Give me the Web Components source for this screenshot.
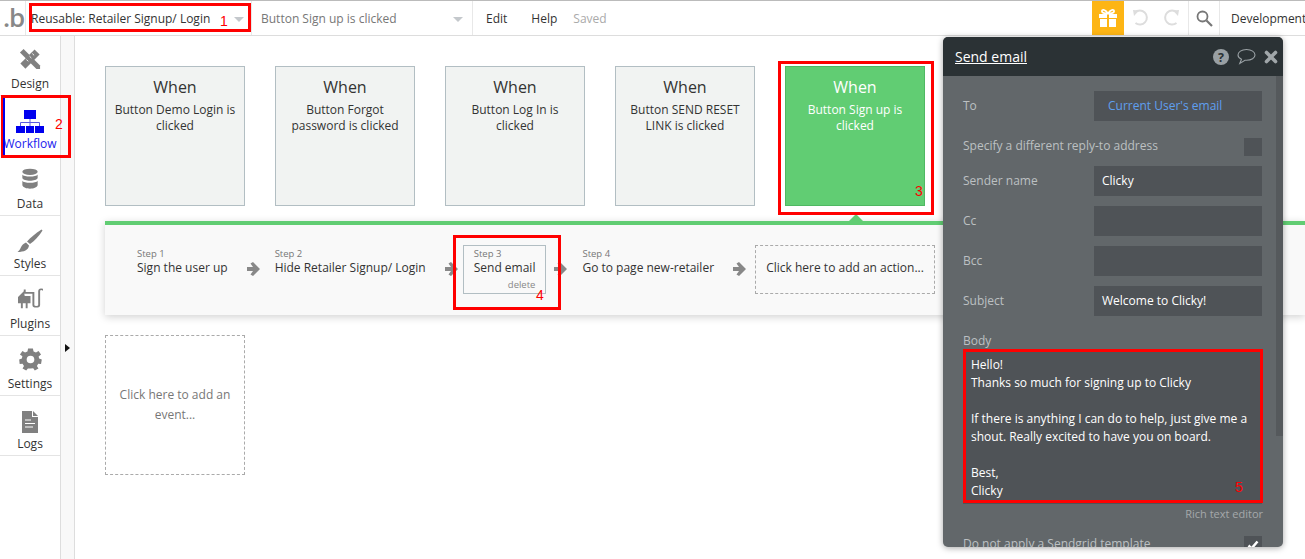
<!DOCTYPE html>
<html lang="en">
<head>
<meta charset="UTF-8">
<title>Workflow editor</title>
<style>
  html, body { margin: 0; height: 100%; overflow: hidden; background: #fff; }
  body { font-family: "Open Sans", "Liberation Sans", sans-serif; color: #222; }
</style>
</head>
<body>
<bubble-editor>
  <top-bar slot="top"></top-bar>
  <side-bar slot="side">
    <side-item label="Design" icon="design" lift="3"></side-item>
    <side-item label="Workflow" icon="workflow" active></side-item>
    <side-item label="Data" icon="data" lift="3"></side-item>
    <side-item label="Styles" icon="styles"></side-item>
    <side-item label="Plugins" icon="plugins" lift="4"></side-item>
    <side-item label="Settings" icon="settings" lift="2"></side-item>
    <side-item label="Logs" icon="logs"></side-item>
  </side-bar>
  <event-row slot="canvas">
    <event-card>Button Demo Login is clicked</event-card>
    <event-card>Button Forgot password is clicked</event-card>
    <event-card>Button Log In is clicked</event-card>
    <event-card>Button SEND RESET LINK is clicked</event-card>
    <event-card selected>Button Sign up is clicked</event-card>
  </event-row>
  <step-bar slot="canvas">
    <wf-step step="Step 1">Sign the user up</wf-step>
    <wf-step step="Step 2">Hide Retailer Signup/ Login</wf-step>
    <wf-step step="Step 3" selected>Send email</wf-step>
    <wf-step step="Step 4">Go to page new-retailer</wf-step>
    <add-box slot="add">Click here to add an action...</add-box>
  </step-bar>
  <add-box slot="canvas" event>Click here to add an event...</add-box>

  <email-panel slot="overlay">
    <panel-field label="To" link>Current User's email</panel-field>
    <panel-check label="Specify a different reply-to address"></panel-check>
    <panel-field label="Sender name">Clicky</panel-field>
    <panel-field label="Cc"></panel-field>
    <panel-field label="Bcc"></panel-field>
    <panel-field label="Subject">Welcome to Clicky!</panel-field>
    <panel-body-text>Hello!
Thanks so much for signing up to Clicky

If there is anything I can do to help, just give me a shout. Really excited to have you on board.

Best,
Clicky</panel-body-text>
    <panel-check label="Do not apply a Sendgrid template" checked></panel-check>
  </email-panel>

  <red-box slot="overlay" box="29,3,222,29" num="1" at="188,8"></red-box>
  <red-box slot="overlay" box="1,95,70,63" num="2" at="51,19" blue></red-box>
  <red-box slot="overlay" box="778,61,156,154" num="3" at="134,120"></red-box>
  <red-box slot="overlay" box="453,235,108,75" num="4" at="80,50"></red-box>
  <red-box slot="overlay" box="963,349,300,154" num="5" at="269,128"></red-box>
</bubble-editor>

<script>
  // 图标
  const ICONS = {
    design: '<svg width="22" height="22" viewBox="0 0 24 24"><g fill="#808080"><path d="M1 5 L5 1 L23 19 L23 23 L19 23 Z"/><path d="M17 1.5 L22.5 7 L7 22.5 L1.5 17 Z"/></g><g stroke="#fff" stroke-width="1"><path d="M14.5 6 L16.5 8M11.5 9 L13.5 11M8 12.500 L10 14.500"/></g></svg>',
    workflow: '<svg width="28" height="23" viewBox="0 0 28 23"><g fill="#0000ee"><rect x="8" y="0" width="12" height="9"/><rect x="0" y="16" width="9" height="7"/><rect x="10" y="16" width="8" height="7"/><rect x="19" y="16" width="9" height="7"/></g><path d="M14 9 V16 M4.500 16 V12.500 H23.500 V16" fill="none" stroke="#5a5ae0" stroke-width="1"/></svg>',
    data: '<svg width="18" height="22" viewBox="0 0 20 24"><g fill="#808080"><ellipse cx="10" cy="4" rx="8.500" ry="3.500"/><path d="M1.500 7 C3 10 17 10 18.500 7 V11 C17 15 3 15 1.500 11 Z"/><path d="M1.500 14 C3 17 17 17 18.500 14 V19 C17 24 3 24 1.500 19 Z"/></g></svg>',
    styles: '<svg width="26" height="24" viewBox="0 0 26 24"><g fill="#808080"><path d="M24.500 0.500 L25.500 1.500 C22 7 18 11.500 13 15 L10 12.500 C14 8 19 4 24.500 0.500 Z"/><path d="M9 13.500 L12 16.500 C11.500 21 7 23 0.500 23 C4 21 3.500 15.500 9 13.500 Z"/></g></svg>',
    plugins: '<svg width="25" height="21" viewBox="0 0 26 26" preserveAspectRatio="none"><path d="M7 2 L7 6 H16 V21 C16 24 22 24 22 21 V4 C22 1 26 1 26 3" fill="none" stroke="#808080" stroke-width="2"/><g fill="#808080"><path d="M6 4 L7 10 H13 V19 H10 V25 H8 V19 H5 V25 H3 V19 H0 V11 Z"/></g></svg>',
    settings: '<svg width="23" height="23" viewBox="0 0 24 24"><path fill="#808080" fill-rule="evenodd" d="M9.500 0.500 H14.500 L15.200 3.600 L17.700 4.700 L20.400 3 L23 6.800 L20.500 8.800 L21 11 L23.800 12 L23 16.800 L20 16.500 L18.700 18.800 L20.300 21.400 L16.500 23.500 L14.800 21 L12 21.300 H9.300 L7.500 23.500 L3.700 21.300 L5.200 18.700 L3.700 16.500 L0.700 16.800 L0.200 12 L3 11 L3.500 8.600 L1 6.800 L3.600 3 L6.300 4.700 L8.800 3.600 Z M12 8 A4 4 0 1 0 12 16 A4 4 0 1 0 12 8 Z"/></svg>',
    logs: '<svg width="18" height="22" viewBox="0 0 18 22"><path fill="#808080" d="M1 0 H11 L11 6 H17 V22 H1 Z"/><path fill="#808080" d="M12 0 L17 5 H12 Z"/><path d="M4 9 H10 M4 12.500 H14 M4 16 H12" stroke="#fff" stroke-width="1"/></svg>'
  }

  class BubbleEditor extends HTMLElement {
    constructor(){
      super()
      this.attachShadow({mode:'open'}).innerHTML = `
        <style>
          :host { display: grid; grid-template-columns: 61px 14px 1fr; grid-template-rows: 36px 1fr;
                  width: 1305px; height: 559px; position: relative; overflow: hidden; }
          .top { grid-column: 1 / 4; }
          .strip { background: #f8f8f8; border-right: 1px solid #ddd; position: relative; }
          .strip i { position: absolute; left: 4px; top: 308px; border-left: 5px solid #111;
                     border-top: 4.500px solid transparent; border-bottom: 4.500px solid transparent; }
          .canvas { padding: 30px 0 0 30px; overflow: hidden; }
        </style>
        <div class="top"><slot name="top"></slot></div>
        <slot name="side"></slot>
        <div class="strip"><i></i></div>
        <div class="canvas"><slot name="canvas"></slot></div>
        <slot name="overlay"></slot>`
    }
  }

  class TopBar extends HTMLElement {
    constructor(){
      super()
      this.attachShadow({mode:'open'}).innerHTML = `
        <style>
          :host { display: flex; height: 36px; box-sizing: border-box; align-items: stretch;
                  border-top: 1px solid #bbb; border-bottom: 1px solid #ddd; font-size: 12px; color: #333; background: #fff; }
          .cell { display: flex; align-items: center; border-right: 1px solid #e8e8e8; box-sizing: border-box; }
          .logo { width: 26px; padding-left: 3px; color: #888; font: 600 26px/1 "Open Sans", sans-serif; letter-spacing: -1px; padding-bottom: 3px; }
          .drop { justify-content: space-between; position: relative; }
          .d1 { width: 226px; padding: 0 7px 0 5px; font-size: 12px; color: #333; }
          .d2 { width: 221px; padding: 0 9px; color: #777; }
          .arrow { border-top: 5px solid #c4c8cc; border-left: 5px solid transparent; border-right: 5px solid transparent; margin-top: 2px; }
          .menu { flex: 1; gap: 24px; padding-left: 13px; border-right: 0; }
          .saved { color: #aaa; margin-left: -8px; }
          .gift { width: 32px; justify-content: center; background: #fdb515; border: 0; }
          .undo { width: 65px; justify-content: space-around; padding: 0 2px; }
          .search { width: 31px; justify-content: center; }
          .env { width: 85px; padding-left: 11px; border: 0; white-space: nowrap; overflow: hidden; }
        </style>
        <div class="cell logo">.b</div>
        <div class="cell drop d1"><span>Reusable: Retailer Signup/ Login</span><i class="arrow"></i></div>
        <div class="cell drop d2"><span>Button Sign up is clicked</span><i class="arrow"></i></div>
        <div class="cell menu"><span>Edit</span><span>Help</span><span class="saved">Saved</span></div>
        <div class="cell gift">
          <svg width="20" height="20" viewBox="0 0 20 20"><path fill="#fff" d="M1 6 H9 V10 H1 Z M11 6 H19 V10 H11 Z M2 11 H9 V19 H2 Z M11 11 H18 V19 H11 Z"/><path d="M10 5.500 C7 1 3.500 1 4 3.500 C4.300 5 7 5.500 10 5.500 C13 5.500 15.700 5 16 3.500 C16.500 1 13 1 10 5.500 Z" fill="none" stroke="#fff" stroke-width="1.800"/></svg>
        </div>
        <div class="cell undo">
          <svg width="18" height="18" viewBox="0 0 18 18"><path d="M3 3.500 A7 7 0 1 1 3.500 14" fill="none" stroke="#ddd" stroke-width="2"/><path d="M1 1 L7 1.500 L2 7 Z" fill="#ddd"/></svg>
          <svg width="18" height="18" viewBox="0 0 18 18"><path d="M15 3.500 A7 7 0 1 0 14.500 14" fill="none" stroke="#ddd" stroke-width="2"/><path d="M17 1 L11 1.500 L16 7 Z" fill="#ddd"/></svg>
        </div>
        <div class="cell search">
          <svg width="17" height="17" viewBox="0 0 17 17"><circle cx="6.500" cy="6.500" r="5" fill="none" stroke="#777" stroke-width="1.800"/><path d="M10.500 10.500 L16 16" stroke="#777" stroke-width="2.200"/></svg>
        </div>
        <div class="cell env">Development</div>`
    }
  }

  class SideBar extends HTMLElement {
    constructor(){
      super()
      this.attachShadow({mode:'open'}).innerHTML = `
        <style>:host { display: block; border-right: 1px solid #ddd; background: #fff; }</style>
        <slot></slot>`
    }
  }

  class SideItem extends HTMLElement {
    constructor(){
      super()
      const active = this.hasAttribute('active')
      const lift = 2 + Number(this.getAttribute('lift') || 0)
      this.attachShadow({mode:'open'}).innerHTML = `
        <style>
          :host { display: flex; flex-direction: column; align-items: center; height: 60px; box-sizing: border-box;
                  border-bottom: 1px solid ${active ? 'transparent' : '#e4e4e4'}; font-size: 12px; color: ${active ? '#2222ee' : '#333'}; }
          .ic { height: 39px; display: flex; align-items: flex-end; justify-content: center; padding-bottom: ${lift}px; box-sizing: border-box; }
          .lb { line-height: 17px; }
        </style>
        <div class="ic">${ICONS[this.getAttribute('icon')]}</div>
        <div class="lb">${this.getAttribute('label')}</div>`
    }
  }

  class EventRow extends HTMLElement {
    constructor(){
      super()
      this.attachShadow({mode:'open'}).innerHTML = `
        <style>:host { display: flex; gap: 30px; }</style>
        <slot></slot>`
    }
  }

  class EventCard extends HTMLElement {
    constructor(){
      super()
      const sel = this.hasAttribute('selected')
      this.attachShadow({mode:'open'}).innerHTML = `
        <style>
          :host { display: block; width: 140px; height: 140px; box-sizing: border-box; text-align: center; padding: 10px 6px 0;
                  background: ${sel ? '#61cd73' : '#f1f3f2'}; border: 1px solid ${sel ? '#4fb862' : '#b2bec3'};
                  color: ${sel ? '#fff' : '#333'}; font-size: 12px; line-height: 16px; position: relative; }
          h4 { margin: 0 0 5px; font-size: 16px; font-weight: 400; line-height: 20px; }
          :host([selected])::after { content: ""; position: absolute; left: 63px; bottom: -16px;
             border-bottom: 7px solid #61cd73; border-left: 7px solid transparent; border-right: 7px solid transparent; }
        </style>
        <h4>When</h4>
        <slot></slot>`
    }
  }

  class StepBar extends HTMLElement {
    constructor(){
      super()
      this.attachShadow({mode:'open'}).innerHTML = `
        <style>
          :host { display: flex; align-items: flex-start; box-sizing: border-box; height: 94px; margin-top: 15px; padding: 20px 0 0 21px;
                  border-top: 4px solid #61cd73; background: #f9f9f9; box-shadow: 0 2px 8px rgba(0,0,0,.18); }
          .add { margin-left: 5px; }
        </style>
        <slot></slot>
        <div class="add"><slot name="add"></slot></div>`
    }
  }

  class WfStep extends HTMLElement {
    constructor(){
      super()
      const sel = this.hasAttribute('selected')
      this.attachShadow({mode:'open'}).innerHTML = `
        <style>
          :host { display: flex; align-items: center; ${sel ? 'margin-left: 1px;' : ''} }
          .box { box-sizing: border-box; height: 49px; padding: 0 10px; border: 1px solid ${sel ? '#b2bec3' : 'transparent'}; position: relative;
                 font-size: 12px; line-height: 16px; color: #333; white-space: nowrap; }
          small { display: block; font-size: 9.500px; line-height: 12px; color: #777; padding-top: 2px; }
          .del { position: absolute; right: 10px; bottom: 2px; font-size: 9.500px; line-height: 12px; color: #888; }
          svg { margin: -2px 4px 0 8px; flex: none; }
        </style>
        <div class="box"><small>${this.getAttribute('step')}</small><slot></slot>${sel ? '<span class="del">delete</span>' : ''}</div>
        <svg width="13" height="14" viewBox="0 0 13 14"><path fill="#888" d="M0 5 H6 L3.500 1.500 L6 0 L13 7 L6 14 L3.500 12.500 L6 9 H0 Z"/></svg>`
    }
  }

  class AddBox extends HTMLElement {
    constructor(){
      super()
      const ev = this.hasAttribute('event')
      this.attachShadow({mode:'open'}).innerHTML = `
        <style>
          :host { display: flex; align-items: center; justify-content: center; text-align: center; box-sizing: border-box;
                  width: ${ev ? 140 : 180}px; height: ${ev ? 140 : 49}px; margin-top: ${ev ? 20 : 0}px;
                  padding: ${ev ? '0 10px' : '0 0 4px'}; border: 1px dashed #aaa; font-size: 12px; line-height: 20px;
                  color: ${ev ? '#777' : '#333'}; }
        </style>
        <slot></slot>`
    }
  }

  class EmailPanel extends HTMLElement {
    constructor(){
      super()
      this.attachShadow({mode:'open'}).innerHTML = `
        <style>
          :host { position: absolute; left: 943px; top: 37px; width: 340px; height: 510px; border-radius: 5px; overflow: hidden;
                  background: #62676a; box-shadow: 0 1px 6px rgba(0,0,0,.35); display: flex; flex-direction: column; }
          header { height: 39px; flex: none; background: #2b3235; display: flex; align-items: center; padding: 0 5px 0 12px; gap: 8px; color: #fff; }
          .title { flex: 1; font-size: 14px; text-decoration: underline; }
          .scroll { flex: 1; padding: 15px 21px 0 20px; display: flex; flex-direction: column; gap: 10px; overflow: hidden; position: relative; }
          .thumb { position: absolute; right: 0; top: 0; width: 7px; height: 360px; background: #55595c; }
          svg { flex: none; display: block; }
        </style>
        <header>
          <span class="title">Send email</span>
          <svg width="16" height="16" viewBox="0 0 16 16"><circle cx="8" cy="8" r="8" fill="#99a0a4"/><text x="8" y="12.500" text-anchor="middle" font-family="Open Sans" font-weight="700" font-size="12.500" fill="#2b3235">?</text></svg>
          <svg width="19" height="17" viewBox="0 0 19 17"><path d="M9.500 1.500 C14.500 1.500 18 4 18 7 C18 10 14.500 12.300 9.500 12.300 L8 12.300 L2.800 15.500 L4.500 11.300 C2.300 10.300 1 8.800 1 7 C1 4 4.500 1.500 9.500 1.500 Z" fill="none" stroke="#99a0a4" stroke-width="1.100"/></svg>
          <svg width="14" height="14" viewBox="0 0 14 14"><path d="M2.500 2.500 L11.500 11.500 M11.500 2.500 L2.500 11.500" stroke="#a0a6a9" stroke-width="3.600" stroke-linecap="round"/></svg>
        </header>
        <div class="scroll"><div class="thumb"></div><slot></slot></div>`
    }
  }

  class PanelField extends HTMLElement {
    constructor(){
      super()
      this.attachShadow({mode:'open'}).innerHTML = `
        <style>
          :host { display: flex; align-items: center; height: 30px; flex: none; font-size: 12px; color: #bcc0c2; }
          .lb { width: 131px; padding-bottom: 2px; }
          .val { width: 168px; height: 30px; box-sizing: border-box; padding: 0 8px 2px; background: #4f5357; display: flex; align-items: center;
                 color: #fff; white-space: nowrap; }
          :host([link]) .val { color: #5f9fef; padding-left: 14px; }
        </style>
        <div class="lb">${this.getAttribute('label')}</div>
        <div class="val"><slot></slot></div>`
    }
  }

  class PanelCheck extends HTMLElement {
    constructor(){
      super()
      const checked = this.hasAttribute('checked')
      this.attachShadow({mode:'open'}).innerHTML = `
        <style>
          :host { display: flex; align-items: flex-start; justify-content: space-between; height: 25px; flex: none; width: 299px;
                  font-size: 12px; line-height: 16px; color: #bcc0c2; box-sizing: border-box; padding-top: 7px; }
          i { width: 18px; height: 18px; background: #4f5357; display: block; }
          svg { display: block; margin: 3px; }
        </style>
        <span>${this.getAttribute('label')}</span>
        <i>${checked ? '<svg width="12" height="12" viewBox="0 0 12 12"><path d="M1.500 6.500 L4.500 9.500 L10.500 2.500" fill="none" stroke="#fff" stroke-width="2.500"/></svg>' : ''}</i>`
    }
  }

  class PanelBodyText extends HTMLElement {
    constructor(){
      super()
      this.attachShadow({mode:'open'}).innerHTML = `
        <style>
          :host { display: block; flex: none; font-size: 12px; color: #bcc0c2; margin-top: 7px; margin-bottom: -3px; }
          .lb { line-height: 16px; margin-bottom: 1px; }
          .txt { width: 299px; height: 154px; box-sizing: border-box; padding: 6px 6px 0 8px; background: #4f5357; color: #fff;
                 line-height: 18px; white-space: pre-wrap; overflow: hidden; }
          .rte { text-align: right; width: 300px; font-size: 11px; line-height: 16px; margin-top: 2px; color: #a5a9ab; }
        </style>
        <div class="lb">Body</div>
        <div class="txt"><slot></slot></div>
        <div class="rte">Rich text editor</div>`
    }
  }

  // 红色标注框：盖在截图内容上面
  class RedBox extends HTMLElement {
    constructor(){
      super()
      const [x, y, w, h] = this.getAttribute('box').split(',')
      const [nx, ny] = this.getAttribute('at').split(',')
      this.attachShadow({mode:'open'}).innerHTML = `
        <style>
          :host { position: absolute; left: ${x}px; top: ${y}px; width: ${w}px; height: ${h}px; box-sizing: border-box;
                  border: 3px solid #f00; pointer-events: none; }
          :host([blue])::before { content: ""; position: absolute; left: -1px; top: 0; bottom: 0; width: 2px; background: #0000ee; }
          span { position: absolute; left: ${nx}px; top: ${ny}px; color: #f00; font: 14px/14px "Liberation Sans", sans-serif; }
        </style>
        <span>${this.getAttribute('num')}</span>`
    }
  }

  customElements.define('bubble-editor', BubbleEditor)
  customElements.define('top-bar', TopBar)
  customElements.define('side-bar', SideBar)
  customElements.define('side-item', SideItem)
  customElements.define('event-row', EventRow)
  customElements.define('event-card', EventCard)
  customElements.define('step-bar', StepBar)
  customElements.define('wf-step', WfStep)
  customElements.define('add-box', AddBox)
  customElements.define('email-panel', EmailPanel)
  customElements.define('panel-field', PanelField)
  customElements.define('panel-check', PanelCheck)
  customElements.define('panel-body-text', PanelBodyText)
  customElements.define('red-box', RedBox)
</script>
</body>
</html>
